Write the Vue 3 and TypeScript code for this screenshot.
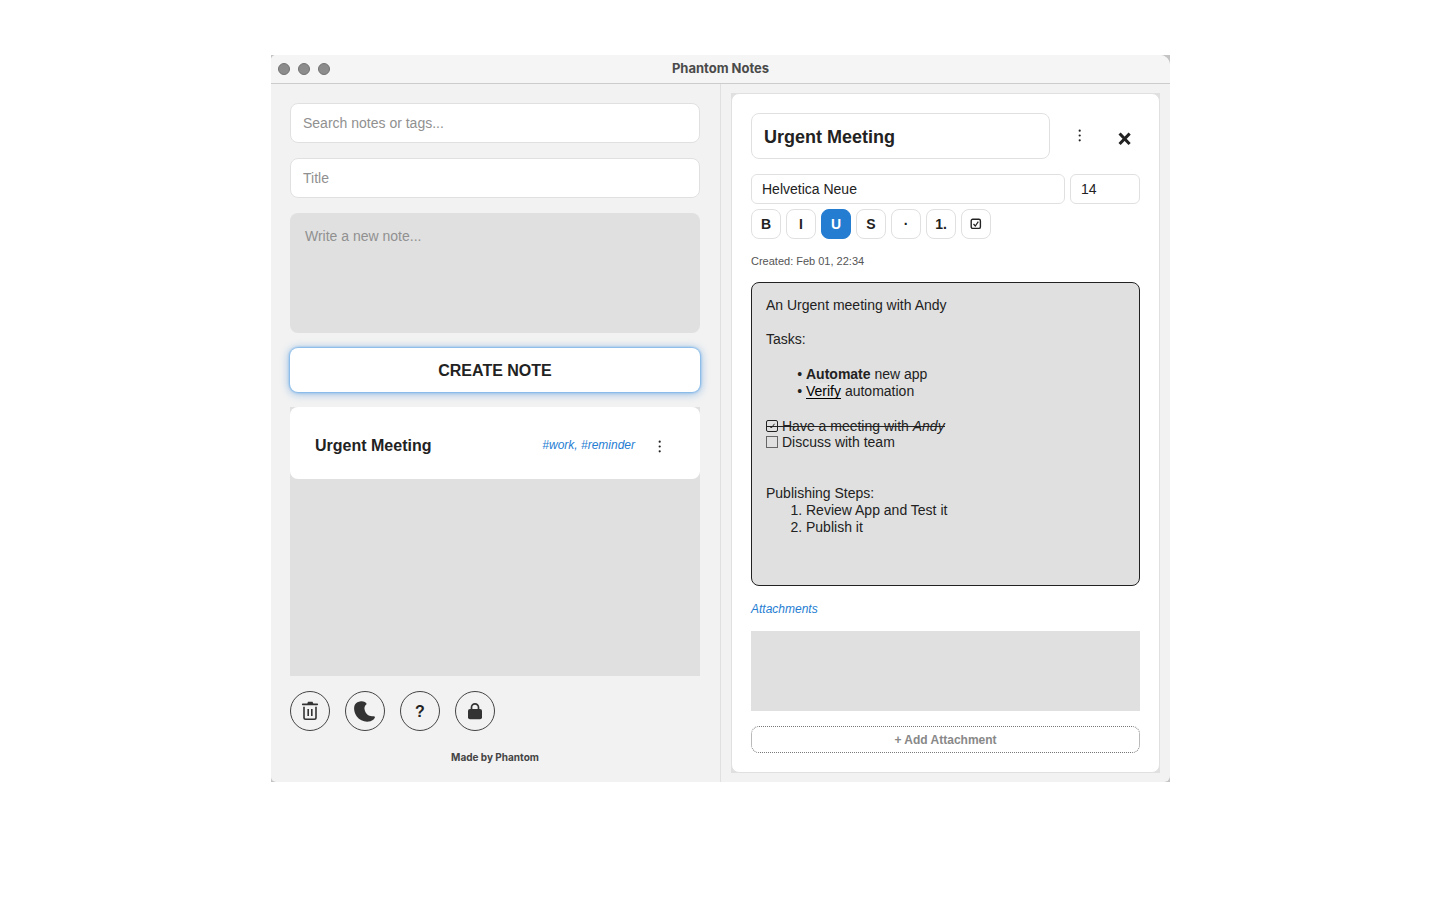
<script setup lang="ts">
import { ref } from 'vue'

interface Tool {
  id: string
  label: string
  name: string
}

interface Note {
  title: string
  tags: string[]
}

const tools: Tool[] = [
  { id: 'bold', label: 'B', name: 'Bold' },
  { id: 'italic', label: 'I', name: 'Italic' },
  { id: 'underline', label: 'U', name: 'Underline' },
  { id: 'strike', label: 'S', name: 'Strikethrough' },
  { id: 'bullets', label: '·', name: 'Bulleted list' },
  { id: 'numbers', label: '1.', name: 'Numbered list' },
  { id: 'check', label: '', name: 'Checklist' },
]

const notes: Note[] = [{ title: 'Urgent Meeting', tags: ['#work', '#reminder'] }]

const activeTool = ref('underline')
const search = ref('')
const newTitle = ref('')
const newBody = ref('')
const noteTitle = ref('Urgent Meeting')
const font = ref('Helvetica Neue')
const size = ref('14')
const metDone = ref(true)
const discussDone = ref(false)
</script>

<template>
  <div class="desktop">
    <div class="window">
      <div class="frame">
        <header class="titlebar">
          <div class="lights">
            <button type="button" aria-label="Close window"></button>
            <button type="button" aria-label="Minimize window"></button>
            <button type="button" aria-label="Zoom window"></button>
          </div>
          <h1>Phantom Notes</h1>
        </header>

        <div class="panes">
          <section class="sidebar">
            <input v-model="search" class="field" type="text" aria-label="Search" placeholder="Search notes or tags..." />
            <input v-model="newTitle" class="field" type="text" aria-label="Title" placeholder="Title" />
            <textarea v-model="newBody" class="draft" aria-label="New note" placeholder="Write a new note..."></textarea>
            <button type="button" class="create">CREATE NOTE</button>

            <div class="list">
              <article v-for="note in notes" :key="note.title" class="note">
                <h2>{{ note.title }}</h2>
                <span class="tags">{{ note.tags.join(', ') }}</span>
                <button type="button" class="plain" aria-label="Note menu">
                  <svg viewBox="0 0 30 30"><g fill="#222"><circle cx="14.7" cy="10.7" r="1.1" /><circle cx="14.7" cy="15.5" r="1.1" /><circle cx="14.7" cy="20.3" r="1.1" /></g></svg>
                </button>
              </article>
            </div>

            <div class="actions">
              <button type="button" class="round" aria-label="Trash">
                <svg viewBox="0 0 24 24"><path d="M9.3 4.6 10 2.8h4.5l.8 1.8h4a.8.8 0 0 1 0 1.6H4.7a.8.8 0 0 1 0-1.6z" fill="#333" /><path d="M6 7.8V18.6q0 1.7 1.7 1.7h8.6q1.7 0 1.7-1.7V7.8" fill="none" stroke="#333" stroke-width="1.6" /><path d="M10.2 10v7M13.8 10v7" stroke="#333" stroke-width="1.6" /></svg>
              </button>
              <button type="button" class="round" aria-label="Dark mode">
                <svg viewBox="0 0 24 24"><path d="M8 2.2C10.500 2 13.300 3.300 13.700 5C11.700 6.500 11 8.500 11.700 11C12.500 14.500 15.500 17.200 19 17.200C20.500 17.200 22 17 22 18.200C21.500 20 19.500 21.500 17.500 22.200C12.500 23.700 7 21.700 3.800 17.500C1.300 14 .2 8.500 2 5.500C3.300 3.300 5 3 8 2.200Z" fill="#333" /></svg>
              </button>
              <button type="button" class="round help">?</button>
              <button type="button" class="round" aria-label="Lock">
                <svg viewBox="0 0 24 24"><rect x="5" y="10" width="14" height="10.3" rx="2" fill="#333" /><path d="M8.5 11V8.3a3.5 3.5 0 0 1 7 0V11" fill="none" stroke="#333" stroke-width="1.7" /></svg>
              </button>
            </div>
            <footer>Made by Phantom</footer>
          </section>

          <section class="viewer">
            <div class="mat">
              <div class="card">
                <div class="heading">
                  <input v-model="noteTitle" class="note-title" type="text" aria-label="Note title" />
                  <button type="button" class="plain" aria-label="More">
                    <svg viewBox="0 0 30 30"><g fill="#222"><circle cx="14.7" cy="9.7" r="1.1" /><circle cx="14.7" cy="14.5" r="1.1" /><circle cx="14.7" cy="19.3" r="1.1" /></g></svg>
                  </button>
                  <button type="button" class="plain" aria-label="Close note">
                    <svg viewBox="0 0 30 30"><path d="m10.6 13.6 8 8.400m0-8.400-8 8.400" stroke="#222" stroke-width="3" stroke-linecap="square" /></svg>
                  </button>
                </div>

                <div class="fonts">
                  <select v-model="font" aria-label="Font"><option>Helvetica Neue</option></select>
                  <select v-model="size" class="size" aria-label="Font size"><option>14</option></select>
                </div>
                <div class="tools">
                  <button v-for="tool in tools" :key="tool.id" type="button" :class="{ active: activeTool === tool.id }" :aria-label="tool.name" @click="activeTool = tool.id">
                    <svg v-if="tool.id === 'check'" viewBox="0 0 12 12"><rect x="1.2" y="1.2" width="9.200" height="9.200" rx="1.5" fill="none" stroke="#222" stroke-width="1.400" /><path d="m3.5 6 1.800 2 3-4.400" fill="none" stroke="#222" stroke-width="1.200" /></svg>
                    <template v-else>{{ tool.label }}</template>
                  </button>
                </div>
                <p class="created">Created: Feb 01, 22:34</p>

                <div class="body" contenteditable="true" spellcheck="false" role="textbox" aria-multiline="true" aria-label="Note text">
                  <p>An Urgent meeting with Andy</p>
                  <p>Tasks:</p>
                  <ul>
                    <li><b>Automate</b> new app</li>
                    <li><u>Verify</u> automation</li>
                  </ul>
                  <div class="checks">
                    <label :class="{ done: metDone }">
                      <input v-model="metDone" type="checkbox" />
                      <svg v-if="metDone" class="tick" viewBox="0 0 12 12"><path d="m3.500 6 1.800 2 3.200-4.200" fill="none" stroke="#222" /></svg>
                      <span>Have a meeting with <i>Andy</i></span>
                    </label>
                    <label :class="{ done: discussDone }">
                      <input v-model="discussDone" type="checkbox" />
                      <span>Discuss with team</span>
                    </label>
                  </div>
                  <div class="steps">
                    <p>Publishing Steps:</p>
                    <ol>
                      <li>Review App and Test it</li>
                      <li>Publish it</li>
                    </ol>
                  </div>
                </div>

                <h3>Attachments</h3>
                <div class="files"></div>
                <button type="button" class="add">+ Add Attachment</button>
              </div>
            </div>
          </section>
        </div>
      </div>
    </div>
  </div>
</template>

<style>
body {
  margin: 0;
  background: #fff;
}
</style>

<style scoped>
.desktop,
.desktop * {
  box-sizing: border-box;
}
.desktop {
  display: flex;
  min-height: 100vh;
  padding: 55px 270px 118px 271px;
  font-family: "Liberation Sans", Arial, sans-serif;
  font-size: 14px;
  color: #222;
}
button,
input,
textarea,
select {
  margin: 0;
  font: inherit;
  color: inherit;
  outline: none;
}
h1, h2, h3, p, ul, ol {
  margin: 0;
  padding: 0;
}
svg {
  display: block;
}
.window {
  flex: 1;
  display: flex;
  background: #c4c4c4;
}
.frame {
  flex: 1;
  display: flex;
  flex-direction: column;
  overflow: hidden;
  border-radius: 5px 10px 6px 5px;
  background: #f2f2f2;
}
.titlebar {
  display: grid;
  grid-template-columns: 1fr auto 1fr;
  align-items: center;
  height: 29px;
  padding: 0 7px;
  border-bottom: 1px solid #ccc;
  background: #f5f5f5;
}
.titlebar h1 {
  padding-bottom: 2px;
  font: 700 13px/16px Inter, sans-serif;
  color: #4a4a4a;
}
.lights {
  display: flex;
  gap: 8px;
}
.lights button {
  width: 12px;
  height: 12px;
  padding: 0;
  border: 1px solid #737373;
  border-radius: 50%;
  background: #8c8c8c;
}
.panes {
  flex: 1;
  display: grid;
  grid-template-columns: 1fr 1fr;
  padding-left: 1px;
}
.sidebar {
  display: flex;
  flex-direction: column;
  gap: 15px;
  padding: 19px 20px 17px 18px;
  border-right: 1px solid #e0e0e0;
}
.field {
  width: 100%;
  height: 40px;
  padding: 0 12px;
  border: 1px solid #e0e0e0;
  border-radius: 8px;
  background: #fff;
}
::placeholder {
  color: #909090;
  opacity: 1;
}
.draft {
  display: block;
  height: 120px;
  padding: 15px;
  border: 0;
  border-radius: 8px;
  background: #e0e0e0;
  line-height: 17px;
  resize: none;
}
.create {
  height: 44px;
  padding: 2px 0 0;
  border: 0;
  border-radius: 8px;
  background: #fff;
  box-shadow: 0 0 2px 1px #7cb5ea, 0 1px 9px 1px rgba(37, 125, 210, 0.45);
  font-size: 16px;
  font-weight: 700;
}
.list {
  flex: 1;
  background: #e0e0e0;
}
.note {
  display: flex;
  align-items: center;
  gap: 10px;
  height: 72px;
  padding: 6px 25px 0;
  border-radius: 8px;
  background: #fff;
}
.note h2 {
  flex: 1;
  font-size: 16px;
  line-height: 20px;
}
.tags,
h3 {
  color: #257dd2;
  font-size: 12px;
  font-style: italic;
  font-weight: 400;
}
.tags {
  padding-bottom: 2px;
}
.plain {
  width: 30px;
  height: 30px;
  padding: 0;
  border: 0;
  background: none;
}
.actions {
  display: flex;
  gap: 15px;
}
.round {
  display: grid;
  place-items: center;
  width: 40px;
  height: 40px;
  padding: 0;
  border: 1px solid #444;
  border-radius: 50%;
  background: none;
}
.round svg {
  width: 24px;
  height: 24px;
}
.help {
  padding-top: 2px;
  font-size: 16px;
  font-weight: 700;
}
footer {
  padding-top: 3px;
  color: #444;
  font: 700 10px/16px Inter, sans-serif;
  text-align: center;
}
.viewer {
  display: flex;
  padding: 9px 10px;
}
.mat {
  flex: 1;
  display: flex;
  min-width: 0;
  background: #e0e0e0;
}
.card {
  flex: 1;
  display: flex;
  flex-direction: column;
  min-width: 0;
  padding: 19px;
  border: 1px solid #e0e0e0;
  border-radius: 8px;
  background: #fff;
}
.heading {
  display: flex;
  align-items: center;
  gap: 15px;
}
.note-title {
  flex: 1;
  min-width: 0;
  height: 46px;
  padding: 2px 12px 0;
  border: 1px solid #e0e0e0;
  border-radius: 8px;
  font-size: 18px;
  font-weight: 700;
}
.fonts {
  display: flex;
  gap: 5px;
  margin-top: 15px;
}
.fonts select {
  flex: 1;
  height: 30px;
  padding: 0 10px;
  border: 1px solid #e0e0e0;
  border-radius: 6px;
  background: #fff;
  appearance: none;
}
.fonts .size {
  flex: 0 0 70px;
}
.tools {
  display: flex;
  gap: 5px;
  margin-top: 5px;
}
.tools button {
  display: grid;
  place-items: center;
  width: 30px;
  height: 30px;
  padding: 0;
  border: 1px solid #e0e0e0;
  border-radius: 8px;
  background: #fff;
  font-weight: 700;
}
.tools .active {
  border-color: #257dd2;
  background: #257dd2;
  color: #fff;
}
.tools svg {
  width: 12px;
  height: 12px;
}
.created {
  margin-top: 15px;
  color: #555;
  font-size: 11px;
  line-height: 14px;
}
.body {
  flex: 1;
  margin-top: 14px;
  padding: 14px;
  border: 1px solid #222;
  border-radius: 8px;
  background: #e0e0e0;
  line-height: 17px;
  outline: none;
}
.body > * + * {
  margin-top: 18px;
}
.body > p + p {
  margin-top: 17px;
}
.body ul,
.body ol {
  padding-left: 40px;
}
.body ul {
  list-style-type: "• ";
}
.body u {
  background: #e5e5e5;
  color: #000;
  text-underline-offset: 2px;
  text-decoration-skip-ink: none;
}
.checks label {
  position: relative;
  display: flex;
  align-items: center;
  gap: 4px;
  width: max-content;
  line-height: 16px;
}
.checks input {
  width: 12px;
  height: 12px;
  border: 1px solid #666;
  appearance: none;
}
.checks .done input {
  border-color: #222;
  border-radius: 2px;
}
.tick {
  position: absolute;
  left: 0;
  width: 12px;
  height: 12px;
}
.done::after {
  position: absolute;
  top: 8px;
  right: 0;
  left: 0;
  height: 1px;
  background: #222;
  content: "";
}
.body .steps {
  margin-top: 35px;
}
h3 {
  margin-top: 16px;
  line-height: 15px;
}
.files {
  height: 80px;
  margin-top: 14px;
  background: #e0e0e0;
}
.add {
  height: 27px;
  margin-top: 15px;
  border: 1px dotted #777;
  border-radius: 8px;
  background: #fff;
  color: #888;
  font-size: 12px;
  font-weight: 700;
}
</style>
